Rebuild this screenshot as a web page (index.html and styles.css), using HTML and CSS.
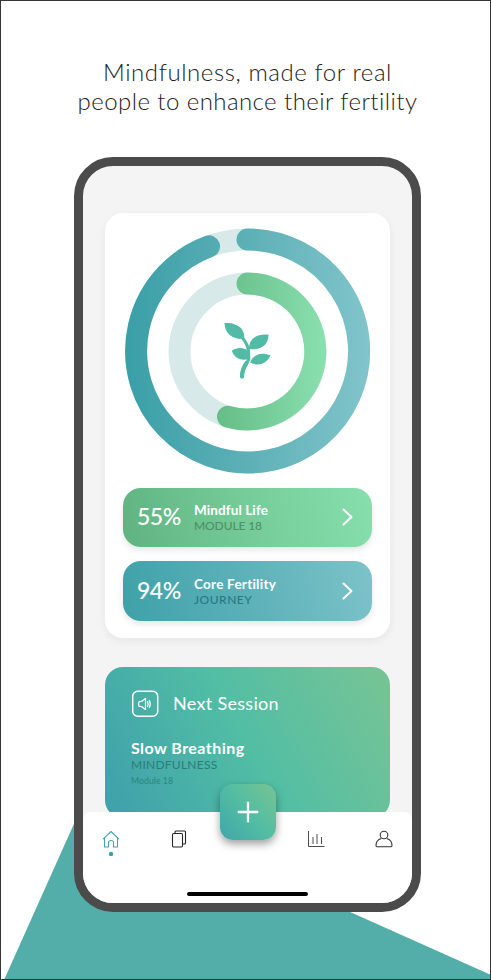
FILE: index.html
```html
<!DOCTYPE html>
<html lang="en">
<head>
<meta charset="utf-8">
<title>Mindfulness</title>
<link rel="stylesheet" href="styles.css">
</head>
<body>
<main class="poster">
  <svg class="backdrop" viewBox="0 0 491 980"><path d="M4 980L77 817 330 903 491 975V980Z" fill="#53aea9"/></svg>
  <h1 class="headline"><span class="line-one">Mindfulness, made for real</span><br><span class="line-two">people to enhance their fertility</span></h1>
  <div class="phone">
    <section class="card progress">
      <svg class="rings" viewBox="0 0 246 246">
        <defs>
          <linearGradient id="teal" gradientUnits="userSpaceOnUse" x1="0" y1="0" x2="246" y2="0"><stop offset="0" stop-color="#3a9fa7"/><stop offset=".5" stop-color="#5eb0b7"/><stop offset="1" stop-color="#81c5cb"/></linearGradient>
          <linearGradient id="green" gradientUnits="userSpaceOnUse" x1="80" y1="0" x2="202" y2="0"><stop offset="0" stop-color="#63b983"/><stop offset="1" stop-color="#8ae0af"/></linearGradient>
        </defs>
        <g fill="none" stroke-width="22" stroke-linecap="round">
          <circle cx="122.5" cy="123" r="111.5" stroke="#d7eae9"/>
          <path d="M122.500 11.5A111.5 111.5 0 1 1 84 18.4" stroke="url(#teal)"/>
          <circle cx="122.5" cy="123.5" r="68" stroke="#d7eae9"/>
          <path d="M122.500 55.500A68 68 0 1 1 103 188.700" stroke="url(#green)"/>
        </g>
        <g transform="translate(89.500 82)" fill="#52bba5">
          <path d="M10 13C17 12.500 23 14.500 26.500 18.200C29 21 30 24.500 29.800 28.800C19 30 10 24 10 13Z"/>
          <path d="M54 24.500C54 33 49 40.500 34.500 39C34 29 42 23.500 54 24.500Z"/>
          <path d="M17.300 40.700C23 36.500 31 37.500 34.500 42L34 49C27 51 20 48.500 17.300 40.700Z"/>
          <path d="M56 45.500C52 53.500 45 57 35.500 52.500C39 44.500 47 41.500 56 45.500Z"/>
          <path d="M28 28C31.500 32 33.500 36 34 41.500L34.200 49.500C30.500 55.500 28 60 27.500 67" fill="none" stroke="#52bba5" stroke-width="3.200" stroke-linecap="round"/>
          <path d="M32 53C28.500 58 27.300 62 27.500 66.500" fill="none" stroke="#52bba5" stroke-width="4.200" stroke-linecap="round"/>
        </g>
      </svg>
      <a class="pill pill-green">
        <span class="percent">55%</span>
        <span class="pill-text"><b class="mindful">Mindful Life</b><span class="module">MODULE 18</span></span>
        <svg class="chevron" viewBox="0 0 11 18"><path d="M1.500 1.500L9.500 9 1.500 16.500"/></svg>
      </a>
      <a class="pill pill-teal">
        <span class="percent">94%</span>
        <span class="pill-text"><b class="core">Core Fertility</b><span class="journey">JOURNEY</span></span>
        <svg class="chevron" viewBox="0 0 11 18"><path d="M1.500 1.500L9.500 9 1.500 16.500"/></svg>
      </a>
    </section>
    <section class="session">
      <div class="session-head">
        <svg class="speaker" viewBox="0 0 28 28" fill="none" stroke="#fff" stroke-linecap="round" stroke-linejoin="round"><rect x="1.700" y="1.200" width="25" height="25" rx="5" stroke-width="1.500"/><path d="M8 11.500H10.500L14.500 8.500V19.500L10.500 16.500H8Q7.300 14 8 11.500M16.500 11.500Q18 14 16.500 16.500M18.300 10.500Q20.300 14 18.300 17.500" stroke-width="1.200"/></svg>
        <span class="session-label">Next Session</span>
      </div>
      <div class="session-title">Slow Breathing</div>
      <div class="session-kind">MINDFULNESS</div>
      <div class="session-module">Module 18</div>
    </section>
    <nav class="tabs">
      <svg class="tab home" viewBox="0 0 18 26" fill="none" stroke="#4aa5a9" stroke-width="1.100" stroke-linejoin="round"><path d="M1 9.200L9 1.500 17 9.200M2.500 8V17H6.500V12.500Q6.500 10.500 9 10.500T11.500 12.500V17H15.500V8"/><circle cx="9" cy="24" r="2.200" fill="#3fa0a8" stroke="none"/></svg>
      <svg class="tab" viewBox="0 0 18 18" fill="none" stroke="#252525" stroke-width="1.100"><rect x="2.500" y="3.500" width="10" height="13.500" rx="1.200"/><path d="M5 3.500V2Q5 1 6 1H14.500Q15.500 1 15.500 2V13Q15.500 14 14.500 14H12.500"/></svg>
      <button class="add" aria-label="Add"><svg viewBox="0 0 22 22"><path d="M11 .7V21.300M.7 11H21.300"/></svg></button>
      <svg class="tab" viewBox="0 0 18 18" fill="none" stroke="#4c4c4c" stroke-width="1"><path d="M1.500 1V16.500H17.500M6 7V14M10 4V14M14.500 7V14"/></svg>
      <svg class="tab" viewBox="0 0 18 18" fill="none" stroke="#333" stroke-width="1.100"><circle cx="9" cy="5" r="3.800"/><path d="M6.300 8.500C3 9.500 1 12 1 15.500Q1 16.700 2 16.700H16Q17 16.700 17 15.500C17 12 15 9.500 11.700 8.500"/></svg>
    </nav>
    <div class="indicator"></div>
  </div>
</main>
</body>
</html>
```

FILE: styles.css
```css
* { box-sizing: border-box; }
body { margin: 0; background: #fff; font-family: Lato, "Liberation Sans", sans-serif; }
.poster { position: relative; width: 491px; height: 980px; border: 1px solid #353535; padding-top: 56px; overflow: hidden; }
.backdrop { position: absolute; left: -1px; top: -1px; width: 491px; height: 980px; }
.headline { margin: 0 0 42px 4px; height: 58px; text-align: center; font-size: 24px; line-height: 29px; font-weight: 300; color: #222; white-space: nowrap; }
.line-one { letter-spacing: .58px; }
.line-two { letter-spacing: .43px; }
.phone { position: relative; width: 347px; height: 755px; margin-left: 73px; border: 9px solid #4b4b4b; border-radius: 39px; background: #f4f4f4; overflow: hidden; display: flex; flex-direction: column; padding-top: 47px; }
.card { width: 285px; height: 425px; flex: none; margin-left: 22px; border-radius: 18px; background: #fff; box-shadow: 0 3px 8px rgba(0,0,0,.06); padding: 15px 18px 0; }
.rings { display: block; width: 246px; height: 246px; margin: 0 0 13.500px 1.500px; }
.pill { display: flex; align-items: center; width: 248.500px; height: 59.500px; margin-bottom: 14px; border-radius: 18px; padding: 0 19px 0 14px; color: #fff; box-shadow: 0 3px 6px rgba(0,0,0,.1); }
.pill-green { background: linear-gradient(75deg, #60b381, #75cc98 50%, #87dfad); }
.pill-teal { background: linear-gradient(75deg, #3ea1a8, #5db1b9 50%, #7dc3c9); }
.percent { width: 57px; font-size: 23px; font-weight: 500; letter-spacing: -.5px; position: relative; top: -1px; }
.pill-text { flex: 1; display: flex; flex-direction: column; font-size: 12px; line-height: 15px; padding-top: 2px; }
.pill-text b { font-size: 13.500px; letter-spacing: .1px; }
.pill-text .core { letter-spacing: .25px; }
.module { color: #4d9069; font-weight: 500; letter-spacing: -.1px; }
.journey { color: #287981; font-weight: 500; letter-spacing: .5px; }
.chevron { width: 11px; height: 18px; fill: none; stroke: #fff; stroke-width: 2; stroke-linecap: round; stroke-linejoin: round; }
.session { width: 285px; height: 151px; flex: none; margin: 28.500px 0 0 22px; border-radius: 18px; padding: 23px 26px; background: linear-gradient(62deg, #40a2ab 5%, #52bea4 50%, #78c494 100%); color: #fff; }
.session-head { display: flex; align-items: center; height: 28px; }
.speaker { width: 28px; height: 28px; margin-right: 14px; }
.session-label { font-size: 18px; letter-spacing: .3px; position: relative; top: -1px; }
.session-title { margin-top: 20px; font-size: 16px; line-height: 19px; font-weight: 700; letter-spacing: .45px; }
.session-kind { font-size: 12px; line-height: 15px; color: #2b7c79; font-weight: 400; letter-spacing: .25px; }
.session-module { margin-top: 3px; font-size: 8.800px; line-height: 12px; color: #2b8581; }
.tabs { position: relative; flex: none; height: 90.500px; margin-top: -5.500px; background: #fff; border-radius: 8px 8px 0 0; display: flex; justify-content: center; gap: 50.300px; padding-top: 17.500px; }
.tab { width: 18px; height: 18px; flex: none; }
.tab.home { height: 26px; }
.add { width: 56px; height: 56px; flex: none; margin: -45.500px -19px 0; padding: 17px; border: 0; border-radius: 13px; background: linear-gradient(50deg, #40a5a9, #52bda3 50%, #78c491); box-shadow: 0 4px 9px rgba(0,0,0,.38); }
.add svg { display: block; width: 22px; height: 22px; fill: none; stroke: #fff; stroke-width: 2.300; }
.indicator { position: relative; flex: none; width: 121px; height: 4px; margin: -11px 0 0 104px; border-radius: 2px; background: #000; }
```
